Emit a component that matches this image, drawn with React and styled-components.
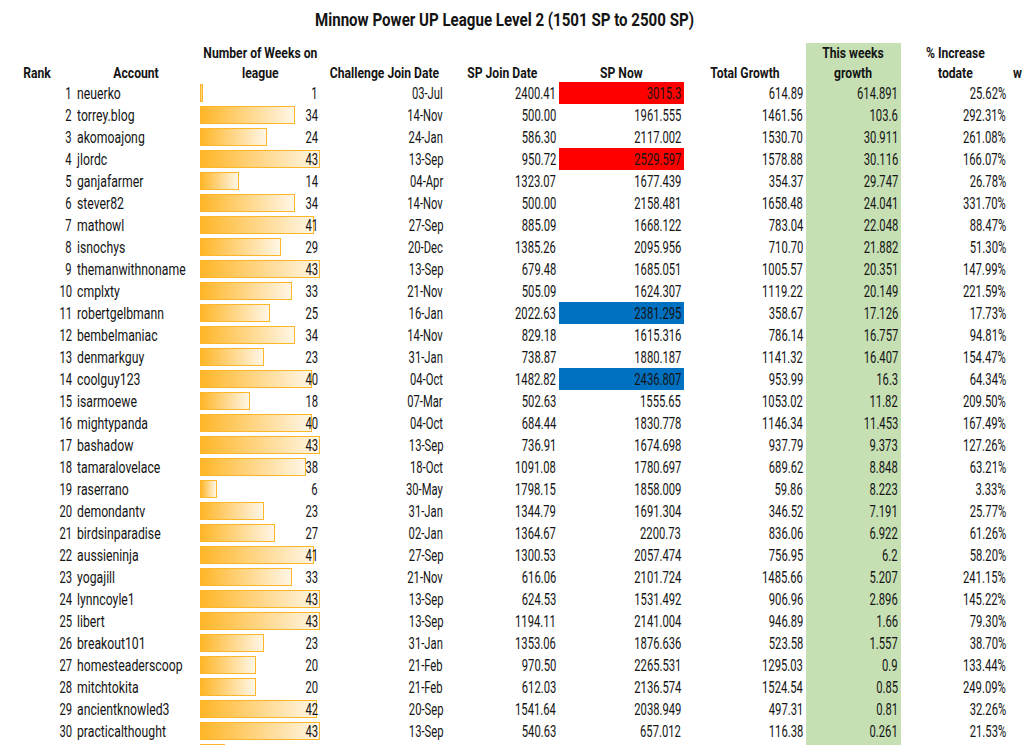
import React from "react";
import styled, { createGlobalStyle } from "styled-components";

const GlobalStyle = createGlobalStyle`
  html, body {
    margin: 0;
    padding: 0;
    background: #fff;
  }
  body {
    font-family: Roboto, "Liberation Sans", sans-serif;
    color: #141414;
    overflow: hidden;
  }
`;

// the sheet uses a very narrow face; squeeze the available ones to match
const NUM_SQUEEZE = 0.66;
const NAME_SQUEEZE = 0.72;
const HEAD_SQUEEZE = 0.81;
const TITLE_SQUEEZE = 0.815;

const COLUMNS = "75px 123px 124px 124px 113px 125px 122px 95px 108px 16px";
const MAX_WEEKS = 43;
const BAR_MAX = 120;

const ROWS = [
  [1, "neuerko", 1, "03-Jul", "2400.41", "3015.3", "614.89", "614.891", "25.62%", "red"],
  [2, "torrey.blog", 34, "14-Nov", "500.00", "1961.555", "1461.56", "103.6", "292.31%"],
  [3, "akomoajong", 24, "24-Jan", "586.30", "2117.002", "1530.70", "30.911", "261.08%"],
  [4, "jlordc", 43, "13-Sep", "950.72", "2529.597", "1578.88", "30.116", "166.07%", "red"],
  [5, "ganjafarmer", 14, "04-Apr", "1323.07", "1677.439", "354.37", "29.747", "26.78%"],
  [6, "stever82", 34, "14-Nov", "500.00", "2158.481", "1658.48", "24.041", "331.70%"],
  [7, "mathowl", 41, "27-Sep", "885.09", "1668.122", "783.04", "22.048", "88.47%"],
  [8, "isnochys", 29, "20-Dec", "1385.26", "2095.956", "710.70", "21.882", "51.30%"],
  [9, "themanwithnoname", 43, "13-Sep", "679.48", "1685.051", "1005.57", "20.351", "147.99%"],
  [10, "cmplxty", 33, "21-Nov", "505.09", "1624.307", "1119.22", "20.149", "221.59%"],
  [11, "robertgelbmann", 25, "16-Jan", "2022.63", "2381.295", "358.67", "17.126", "17.73%", "blue"],
  [12, "bembelmaniac", 34, "14-Nov", "829.18", "1615.316", "786.14", "16.757", "94.81%"],
  [13, "denmarkguy", 23, "31-Jan", "738.87", "1880.187", "1141.32", "16.407", "154.47%"],
  [14, "coolguy123", 40, "04-Oct", "1482.82", "2436.807", "953.99", "16.3", "64.34%", "blue"],
  [15, "isarmoewe", 18, "07-Mar", "502.63", "1555.65", "1053.02", "11.82", "209.50%"],
  [16, "mightypanda", 40, "04-Oct", "684.44", "1830.778", "1146.34", "11.453", "167.49%"],
  [17, "bashadow", 43, "13-Sep", "736.91", "1674.698", "937.79", "9.373", "127.26%"],
  [18, "tamaralovelace", 38, "18-Oct", "1091.08", "1780.697", "689.62", "8.848", "63.21%"],
  [19, "raserrano", 6, "30-May", "1798.15", "1858.009", "59.86", "8.223", "3.33%"],
  [20, "demondantv", 23, "31-Jan", "1344.79", "1691.304", "346.52", "7.191", "25.77%"],
  [21, "birdsinparadise", 27, "02-Jan", "1364.67", "2200.73", "836.06", "6.922", "61.26%"],
  [22, "aussieninja", 41, "27-Sep", "1300.53", "2057.474", "756.95", "6.2", "58.20%"],
  [23, "yogajill", 33, "21-Nov", "616.06", "2101.724", "1485.66", "5.207", "241.15%"],
  [24, "lynncoyle1", 43, "13-Sep", "624.53", "1531.492", "906.96", "2.896", "145.22%"],
  [25, "libert", 43, "13-Sep", "1194.11", "2141.004", "946.89", "1.66", "79.30%"],
  [26, "breakout101", 23, "31-Jan", "1353.06", "1876.636", "523.58", "1.557", "38.70%"],
  [27, "homesteaderscoop", 20, "21-Feb", "970.50", "2265.531", "1295.03", "0.9", "133.44%"],
  [28, "mitchtokita", 20, "21-Feb", "612.03", "2136.574", "1524.54", "0.85", "249.09%"],
  [29, "ancientknowled3", 42, "20-Sep", "1541.64", "2038.949", "497.31", "0.81", "32.26%"],
  [30, "practicalthought", 43, "13-Sep", "540.63", "657.012", "116.38", "0.261", "21.53%"],
  [31, "", 9, "", "", "", "", "", ""],
];

const HIGHLIGHT = {
  red: "#ff0000",
  blue: "#0070c0",
};

const Cell = ({ children, fill }) => (
  <Num $fill={fill}>
    <Squeeze $k={NUM_SQUEEZE} $origin="right center">
      {children}
    </Squeeze>
  </Num>
);

const Header = ({ children, green }) => (
  <Head $green={green}>
    <Squeeze $k={HEAD_SQUEEZE} $origin="center bottom">
      {children}
    </Squeeze>
  </Head>
);

const App = () => {
  return (
    <Sheet>
      <GlobalStyle />
      <Title>
        <Squeeze $k={TITLE_SQUEEZE} $origin="center center">
          Minnow Power UP League Level 2 (1501 SP to 2500 SP)
        </Squeeze>
      </Title>
      <HeaderRow>
        <Header>Rank</Header>
        <Header>Account</Header>
        <Header>
          Number of Weeks on
          <br />
          league
        </Header>
        <Header>Challenge Join Date</Header>
        <Header>SP Join Date</Header>
        <Header>SP Now</Header>
        <Header>Total Growth</Header>
        <Header green>
          This weeks
          <br />
          growth
        </Header>
        <Header>
          % Increase
          <br />
          todate
        </Header>
        <EdgeHead>
          <Squeeze $k={HEAD_SQUEEZE} $origin="left bottom">
            w
          </Squeeze>
        </EdgeHead>
      </HeaderRow>
      {ROWS.map(
        ([rank, account, weeks, joined, spJoin, spNow, total, week, pct, mark]) => (
          <Row key={rank}>
            <Cell>{account ? rank : ""}</Cell>
            <Account>
              <Squeeze $k={NAME_SQUEEZE} $origin="left center">
                {account}
              </Squeeze>
            </Account>
            <Weeks>
              <Bar style={{ width: (weeks / MAX_WEEKS) * BAR_MAX }} />
              <WeeksValue>
                <Squeeze $k={NUM_SQUEEZE} $origin="right center">
                  {account ? weeks : ""}
                </Squeeze>
              </WeeksValue>
            </Weeks>
            <Cell>{joined}</Cell>
            <Cell>{spJoin}</Cell>
            <Cell fill={HIGHLIGHT[mark]}>{spNow}</Cell>
            <Cell>{total}</Cell>
            <Cell fill="#c6e0b4">{week}</Cell>
            <Cell>{pct}</Cell>
            <span />
          </Row>
        )
      )}
    </Sheet>
  );
};

const Sheet = styled.div`
  width: 1025px;
  height: 745px;
  overflow: hidden;
  font-size: 17px;
`;

const Squeeze = styled.span`
  display: inline-block;
  white-space: nowrap;
  transform: scaleX(${(p) => p.$k});
  transform-origin: ${(p) => p.$origin};
`;

const Title = styled.div`
  width: 1009px;
  height: 43px;
  display: flex;
  align-items: center;
  justify-content: center;
  padding-bottom: 4px;
  box-sizing: border-box;
  font-size: 18.5px;
  font-weight: 700;
`;

const HeaderRow = styled.div`
  display: grid;
  grid-template-columns: ${COLUMNS};
  height: 39px;
`;

const Head = styled.div`
  display: flex;
  align-items: flex-end;
  justify-content: center;
  padding-bottom: 1px;
  text-align: center;
  font-weight: 700;
  font-size: 15px;
  line-height: 20px;
  white-space: nowrap;
  background: ${(p) => (p.$green ? "#c6e0b4" : "transparent")};
`;

const EdgeHead = styled(Head)`
  justify-content: flex-start;
  padding-left: 4px;
  overflow: hidden;
`;

const Row = styled.div`
  display: grid;
  grid-template-columns: ${COLUMNS};
  height: 22px;
  line-height: 22px;
`;

const Num = styled.div`
  text-align: right;
  padding-right: 3px;
  background: ${(p) => p.$fill || "transparent"};
  white-space: nowrap;
`;

const Account = styled.div`
  padding-left: 2px;
  white-space: nowrap;
`;

const Weeks = styled.div`
  display: grid;
  align-items: center;
`;

const Bar = styled.div`
  grid-area: 1 / 1;
  justify-self: start;
  height: 18px;
  margin-left: 2px;
  box-sizing: border-box;
  border: 1px solid #ffb628;
  background: linear-gradient(to right, #ffb628, #fff6e6);
`;

const WeeksValue = styled.div`
  grid-area: 1 / 1;
  text-align: right;
  padding-right: 4px;
  position: relative;
`;

export default App;
